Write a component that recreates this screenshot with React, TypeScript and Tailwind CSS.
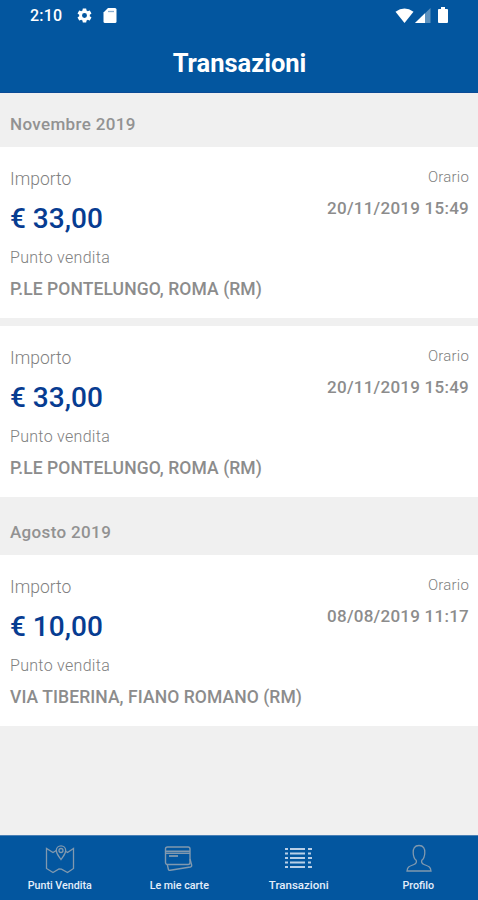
import React from "react";

type Transaction = { amount: string; time: string; place: string };

function StatusBar() {
  return (
    <div className="flex h-[30px] items-center justify-between pl-[30px] pr-[29px]">
      <div className="flex items-center">
        <span className="w-[46px] pt-px text-[16px] font-medium leading-[17px] tracking-[0.2px]">2:10</span>
        <svg className="size-[17px]" viewBox="0 0 24 24" fill="currentColor">
          <path d="M19.43 12.98c.04-.32.07-.64.07-.98s-.03-.66-.07-.98l2.11-1.65c.19-.15.24-.42.12-.64l-2-3.46c-.12-.22-.39-.3-.61-.22l-2.49 1c-.52-.4-1.08-.73-1.69-.98l-.38-2.65A.49.49 0 0 0 14 2h-4c-.25 0-.46.18-.49.42l-.38 2.65c-.61.25-1.17.59-1.69.98l-2.49-1c-.23-.09-.49 0-.61.22l-2 3.46c-.13.22-.07.49.12.64l2.11 1.65c-.04.32-.07.65-.07.98s.03.66.07.98l-2.11 1.65c-.19.15-.24.42-.12.64l2 3.46c.12.22.39.3.61.22l2.49-1c.52.4 1.08.73 1.69.98l.38 2.65c.03.24.24.42.49.42h4c.25 0 .46-.18.49-.42l.38-2.65c.61-.25 1.17-.59 1.69-.98l2.49 1c.23.09.49 0 .61-.22l2-3.46c.12-.22.07-.49-.12-.64zM12 15.5a3.5 3.5 0 1 1 0-7 3.5 3.5 0 0 1 0 7z" />
        </svg>
        <svg className="ml-[10px] h-[15px] w-[14px]" viewBox="0 0 14 15">
          <path d="M5 0h7q1.500 0 1.500 1.500v12Q13.500 15 12 15H2Q.5 15 .5 13.500V4.500z" fill="#fff" />
          <path d="M5 3.500h6" stroke="#8aafd0" strokeWidth="1.300" />
        </svg>
      </div>
      <div className="flex items-center">
        <svg className="mr-px h-[15px] w-[19px]" viewBox="0 0 19 15">
          <path d="M.5 3.700Q9.500-2.800 18.500 3.700L9.500 15z" fill="#fff" />
        </svg>
        <svg className="h-[15px] w-[16px]" viewBox="0 0 16 15">
          <path d="M0 15 15.500 0v15z" fill="#5d91be" />
          <path d="M0 15 10 5.300V15z" fill="#fff" />
        </svg>
        <svg className="ml-[7px] mr-px h-[16px] w-[10px]" viewBox="0 0 10 17" preserveAspectRatio="none">
          <path d="M3 0h4v2h2q1 0 1 1v13q0 1-1 1H1q-1 0-1-1V3q0-1 1-1h2z" fill="#fff" />
        </svg>
      </div>
    </div>
  );
}

function SectionTitle({ children, first }: { children: string; first?: boolean }) {
  return (
    <h2 className={`px-[10px] text-[17px] font-medium leading-6 tracking-[0.35px] text-[#929292] ${first ? "h-[54px] pt-[19px]" : "h-[58px] pt-[23px]"}`}>
      {children}
    </h2>
  );
}

function Card({ amount, time, place }: Transaction) {
  return (
    <article className="flex h-[171px] justify-between bg-white pl-[10px] pr-[9px] text-[#8c8c8c]">
      <div className="whitespace-nowrap pt-[19.500px]">
        <p className="text-[17.500px] font-light leading-6 text-[#808080]">Importo</p>
        <p className="mt-2 text-[28px] font-medium leading-10 text-[#073c91]">{amount}</p>
        <p className="mt-[7px] text-[16px] font-light leading-6 tracking-[0.3px] text-[#808080]">Punto vendita</p>
        <p className="mt-[7px] text-[17.500px] font-medium leading-6 tracking-[0.08px]">{place}</p>
      </div>
      <div className="whitespace-nowrap pt-[18px] text-right">
        <p className="text-[15px] font-light leading-6 tracking-[0.2px] text-[#808080]">Orario</p>
        <p className="mt-[7px] text-[17px] font-medium leading-6 tracking-[0.25px]">{time}</p>
      </div>
    </article>
  );
}

const MapIcon = () => (
  <svg className="h-[30px] w-[30px]" viewBox="0 0 30 30" fill="none" stroke="currentColor" strokeWidth="1.300">
    <path d="M11.300 6.500 8 8.500 1.500 4.500v20L8 28.500l6-3.500 2.500.2 6 3.300 6-4v-20l-6 4-1.500-1" />
    <path d="M16 15.500c-2-3-4.700-5.300-4.700-9a4.700 4.700 0 0 1 9.400 0c0 3.700-2.700 6-4.700 9z" />
    <circle cx="16" cy="6.500" r="2" />
  </svg>
);

const CardsIcon = () => (
  <svg className="h-[30px] w-[30px]" viewBox="0 0 30 30" fill="none" stroke="currentColor" strokeWidth="1.400">
    <rect x="1.500" y="3" width="24.500" height="17.500" rx="2" />
    <path d="M1.500 7.200H26M1.500 9.200H26" />
    <path d="M5 12h9" strokeWidth="1.800" />
    <path d="m3.300 20.700 1 4.300q.4 1.700 2 1.300l20-3.300q1.700-.4 1.300-2L26 15" />
  </svg>
);

const ListIcon = () => (
  <svg className="h-[30px] w-[30px]" viewBox="0 0 30 30" fill="none" stroke="currentColor" strokeWidth="1.900">
    {[5, 9.500, 14, 18.500, 23].map((y) => (
      <path key={y} d={`M1 ${y}h3M6 ${y}h15M24 ${y}h${y === 9.500 || y === 18.500 ? 3 : 4}`} />
    ))}
  </svg>
);

const ProfileIcon = () => (
  <svg className="ml-px h-[30px] w-[30px]" viewBox="0 0 30 30" fill="none" stroke="currentColor" strokeWidth="1.300">
    <path d="M15 1.500c-4.500 0-6 3-5.800 7.200.1 3.200 1 6 3 7.600.8 2.500-.2 3.400-2.200 4.200-4.700 1.800-6.500 2-7 6.500h24c-.5-4.500-2.300-4.700-7-6.500-2-.8-3-1.700-2.200-4.200 2-1.600 2.900-4.400 3-7.600.2-4.200-1.300-7.200-5.800-7.200z" />
  </svg>
);

const tabs = [
  { label: "Punti Vendita", icon: <MapIcon />, color: "text-[#8199af]", text: "text-[10.700px] mt-1" },
  { label: "Le mie carte", icon: <CardsIcon />, color: "text-[#8199af]", text: "text-[10.700px] mt-1" },
  { label: "Transazioni", icon: <ListIcon />, color: "text-[#b9cfe7]", text: "text-[11.500px] mt-[3px]" },
  { label: "Profilo", icon: <ProfileIcon />, color: "text-[#8199af]", text: "text-[10.700px] mt-1" },
];

export default function App() {
  return (
    <div className="flex h-[900px] w-full flex-col overflow-hidden bg-[#f0f0f0] font-['Roboto',sans-serif]">
      <header className="h-[93px] shrink-0 border-b border-[#0a4b96] bg-[#03569f] text-white">
        <StatusBar />
        <h1 className="pt-[17px] pl-px text-center text-[25.500px] font-bold leading-8">Transazioni</h1>
      </header>
      <main className="flex-1">
        <SectionTitle first>Novembre 2019</SectionTitle>
        <div className="flex flex-col gap-2">
          <Card amount="€ 33,00" time="20/11/2019 15:49" place="P.LE PONTELUNGO, ROMA (RM)" />
          <Card amount="€ 33,00" time="20/11/2019 15:49" place="P.LE PONTELUNGO, ROMA (RM)" />
        </div>
        <SectionTitle>Agosto 2019</SectionTitle>
        <Card amount="€ 10,00" time="08/08/2019 11:17" place="VIA TIBERINA, FIANO ROMANO (RM)" />
      </main>
      <nav className="grid h-[65px] shrink-0 grid-cols-4 border-t border-[#4a80b5] bg-[#03569f]">
        {tabs.map(({ label, icon, color, text }) => (
          <div key={label} className="flex flex-col items-center pt-2">
            <span className={color}>{icon}</span>
            <span className={`whitespace-nowrap font-medium leading-4 text-[#e4eefb] ${text}`}>{label}</span>
          </div>
        ))}
      </nav>
    </div>
  );
}
